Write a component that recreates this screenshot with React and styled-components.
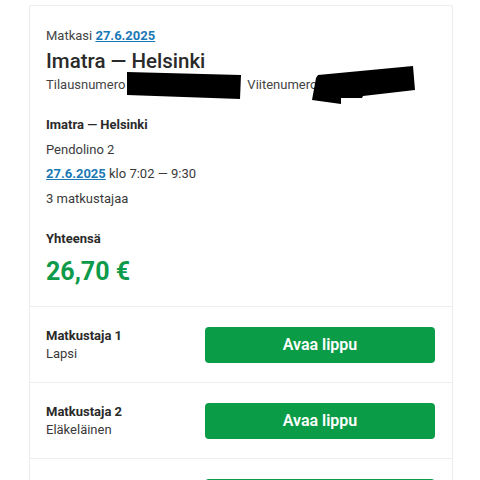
import styled, { createGlobalStyle } from "styled-components"

const GlobalStyle = createGlobalStyle`
  body {
    margin: 0;
    background: #fff;
    font-family: Roboto, "Liberation Sans", Arial, sans-serif;
    color: #333;
  }
`

const Page = styled.div`
  padding: 5px 0 0 29px;
  height: 475px;
  overflow: hidden;
`

const Card = styled.div`
  width: 422px;
  border: 1px solid #ececec;
  border-radius: 2px;
  background: #fff;
`

const Header = styled.div`
  padding: 21px 16px 0;
`

const Small = styled.div`
  font-size: 13px;
  line-height: 18px;
  color: #444;
`

const DateLink = styled.a`
  color: #1a79b5;
  font-weight: 700;
  text-decoration: underline;
`

const Title = styled.h1`
  margin: 2px 0 0;
  font-size: 20.5px;
  line-height: 28px;
  font-weight: 500;
  color: #2a2a2a;
`

const Refs = styled.div`
  display: flex;
  align-items: center;
  height: 18px;
  font-size: 13px;
  color: #444;
`

const Redaction = styled.svg`
  flex: none;
  margin: -14px 0;
  transform: translateY(${(p) => p.$shift}px);
`

const Details = styled.div`
  padding: 20px 16px 0;
`

const Line = styled.div`
  font-size: 13px;
  line-height: 24.5px;
  font-weight: ${(p) => (p.$bold ? 700 : 400)};
  color: ${(p) => (p.$bold ? "#2a2a2a" : "#3a3a3a")};
`

const Total = styled.div`
  padding: 16px 16px 18px;
`

const Price = styled.div`
  margin-top: 4px;
  font-size: 25px;
  line-height: 32px;
  font-weight: 700;
  color: #0d9a4a;
`

const PassengerRow = styled.div`
  display: flex;
  align-items: center;
  justify-content: space-between;
  padding: 20px 17px 19px 16px;
  border-top: 1px solid #eeeeee;
`

const PassengerInfo = styled.div`
  display: flex;
  flex-direction: column;
`

const PassengerName = styled.div`
  font-size: 13px;
  line-height: 18px;
  font-weight: 700;
  color: #2a2a2a;
`

const PassengerType = styled.div`
  font-size: 13px;
  line-height: 18px;
  color: #3a3a3a;
`

const Button = styled.button`
  width: 230px;
  height: 36px;
  border: none;
  border-radius: 4px;
  background: #0b9c47;
  color: #fff;
  font-family: inherit;
  font-size: 16px;
  font-weight: 600;
  cursor: pointer;
`

const RefLabel = styled.span`
  margin-left: 5px;
`

const passengers = [
  { name: "Matkustaja 1", type: "Lapsi" },
  { name: "Matkustaja 2", type: "Eläkeläinen" },
  { name: "Matkustaja 3", type: "Aikuinen" },
]

export default function App() {
  return (
    <>
      <GlobalStyle />
      <Page>
        <Card>
          <Header>
            <Small>
              Matkasi <DateLink>27.6.2025</DateLink>
            </Small>
            <Title>Imatra — Helsinki</Title>
            <Refs>
              Tilausnumero
              <Redaction $shift={2} width="117" height="30" viewBox="0 0 117 30">
                <polygon points="2,1 116,4 115,28 2,24" fill="#000" />
              </Redaction>
              <RefLabel>Viitenumero</RefLabel>
              <Redaction $shift={1} width="110" height="42" viewBox="0 0 110 42" style={{ marginLeft: -6 }}>
                <polygon
                  points="7,11 102,2 104,26 52,32 51,34 30,34 30,40 1,36 5,14"
                  fill="#000"
                />
              </Redaction>
            </Refs>
          </Header>
          <Details>
            <Line $bold>Imatra — Helsinki</Line>
            <Line>Pendolino 2</Line>
            <Line>
              <DateLink>27.6.2025</DateLink> klo 7:02 — 9:30
            </Line>
            <Line>3 matkustajaa</Line>
          </Details>
          <Total>
            <Line $bold>Yhteensä</Line>
            <Price>26,70 €</Price>
          </Total>
          {passengers.map((p) => (
            <PassengerRow key={p.name}>
              <PassengerInfo>
                <PassengerName>{p.name}</PassengerName>
                <PassengerType>{p.type}</PassengerType>
              </PassengerInfo>
              <Button>Avaa lippu</Button>
            </PassengerRow>
          ))}
        </Card>
      </Page>
    </>
  )
}
